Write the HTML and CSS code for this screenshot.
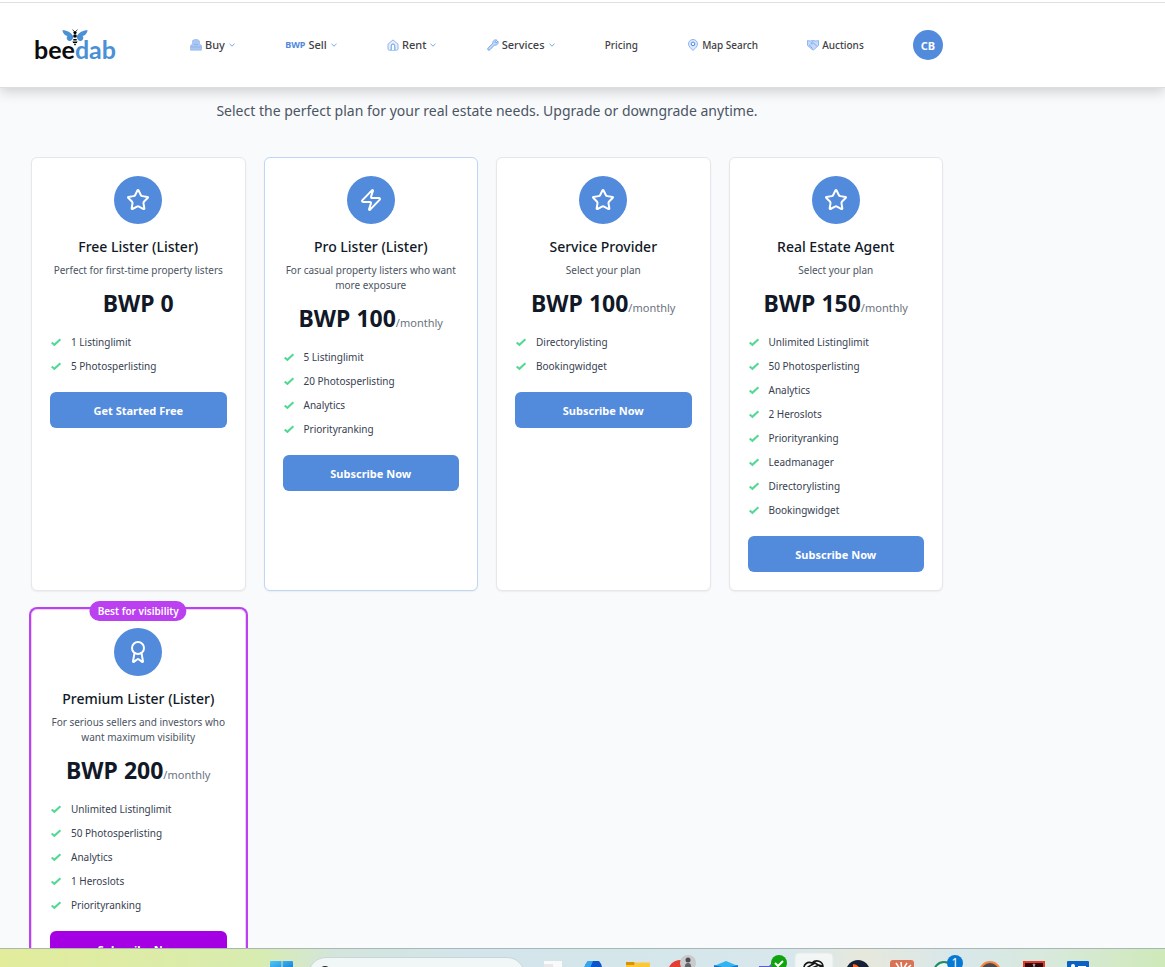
FILE: index.html
```html
<!DOCTYPE html>
<html lang="en">
<head>
<meta charset="utf-8">
<title>beedab – Pricing</title>
<link rel="stylesheet" href="styles.css">
</head>
<body>
<svg class="defs" aria-hidden="true">
  <symbol id="star" viewBox="0 0 24 24"><path d="M11.525 2.295a.53.53 0 0 1 .95 0l2.31 4.679a2.123 2.123 0 0 0 1.595 1.16l5.166.756a.53.53 0 0 1 .294.904l-3.736 3.638a2.123 2.123 0 0 0-.611 1.878l.882 5.14a.53.53 0 0 1-.771.56l-4.618-2.428a2.122 2.122 0 0 0-1.973 0L6.396 21.01a.53.53 0 0 1-.77-.56l.881-5.139a2.122 2.122 0 0 0-.611-1.879L2.16 9.795a.53.53 0 0 1 .294-.906l5.165-.755a2.122 2.122 0 0 0 1.597-1.16z"/></symbol>
  <symbol id="zap" viewBox="0 0 24 24"><path d="M4 14a1 1 0 0 1-.78-1.63l9.9-10.2a.5.5 0 0 1 .86.46l-1.92 6.02A1 1 0 0 0 13 10h7a1 1 0 0 1 .78 1.63l-9.9 10.2a.5.5 0 0 1-.86-.46l1.92-6.02A1 1 0 0 0 11 14z"/></symbol>
  <symbol id="award" viewBox="0 0 24 24"><circle cx="12" cy="8" r="6"/><path d="m15.477 12.89 1.515 8.526a.5.5 0 0 1-.81.47l-3.58-2.687a1 1 0 0 0-1.197 0l-3.586 2.686a.5.5 0 0 1-.81-.469l1.514-8.526"/></symbol>
  <symbol id="check" viewBox="0 0 12 12"><path d="M1.700 6.400 4.400 8.800 10.400 3.200"/></symbol>
  <symbol id="chevron" viewBox="0 0 8 8"><path d="M1.500 2.800 4 5.200 6.500 2.800"/></symbol>
</svg>

<header class="header">
  <div class="container header-row">
    <a class="logo" href="#" aria-label="beedab home">
      <span class="logo-bee">bee</span><span class="logo-dab">dab</span>
      <svg class="logo-icon" viewBox="0 0 26 17">
        <path fill="#4a90d6" d="M11.500 7.500C9 3 4 .8.300 1.200 1 4.500 3 6.500 5.500 7 4 8 4.500 11 7 12c2 .5 4-1.500 4.500-4.500zM14.500 7.500C17 3 22 .8 25.700 1.200 25 4.500 23 6.500 20.500 7c1.500 1 1 4-1.500 5-2 .5-4-1.500-4.500-4.500z"/>
        <circle cx="13" cy="3.600" r="1.600"/><ellipse cx="13" cy="7" rx="1.800" ry="1.700"/>
        <path d="M11.300 10h3.400v1.400h-3.400zM10.400 12.400h5.200l-.8 1.600h-3.600zM11.700 14.800h2.600L13 16.800z"/>
        <path fill="none" stroke="#111" stroke-width=".8" d="M12.300 2.400 10.500.7M13.700 2.400 15.500.7"/>
      </svg>
    </a>
    <nav class="nav" aria-label="Main">
      <button class="nav-item" type="button">
        <svg class="nav-icon" viewBox="0 0 12 12"><path fill="#a9c5f1" stroke="#8fb3ec" stroke-width=".6" d="M2.500 5V1.600L4.500.5h3l2 1.500V5l2 1.500v4.700H.5V6.500z"/><path stroke="#7ea7e8" stroke-width=".6" d="M.6 8h11M4 5.500h4"/></svg>
        <span>Buy</span><svg class="chevron"><use href="#chevron"/></svg>
      </button>
      <button class="nav-item" type="button"><span class="currency">BWP</span><span>Sell</span><svg class="chevron"><use href="#chevron"/></svg></button>
      <button class="nav-item" type="button">
        <svg class="nav-icon" viewBox="0 0 12 12"><path fill="#e8f0fc" stroke="#8ab4f3" stroke-width="1" d="M1 5.200 6 .9l5 4.300v4.600q0 1.400-1.400 1.400H2.400Q1 11.200 1 9.800z"/><path fill="#fff" stroke="#5f97e8" stroke-width="1" d="M4.200 11V6.800Q4.200 5 6 5t1.800 1.800V11"/></svg>
        <span>Rent</span><svg class="chevron"><use href="#chevron"/></svg>
      </button>
      <button class="nav-item" type="button">
        <svg class="nav-icon" viewBox="0 0 12 12"><path fill="#c5dafa" stroke="#6b9fea" stroke-width=".9" stroke-linejoin="round" d="M10 1.200 8 3.200l.9.900 2-2c1 2.300-1 4.600-3.400 3.900L3 10.700Q2 11.600 1 10.900q-.8-1 .2-2L5.900 4.300C5.300 2 7.700.1 10 1.200z"/></svg>
        <span>Services</span><svg class="chevron"><use href="#chevron"/></svg>
      </button>
      <a class="nav-item nav-link" href="#">Pricing</a>
      <a class="nav-item nav-link" href="#">
        <svg class="nav-icon" viewBox="0 0 12 12"><path fill="#dce9fc" stroke="#8ab4f3" stroke-width="1" d="M6 11.400C3.300 9 1.500 7.300 1.500 4.900a4.500 4.400 0 0 1 9 0C10.500 7.300 8.700 9 6 11.400z"/><circle cx="6" cy="4.900" r="1.800" fill="#fff" stroke="#4b88e0"/></svg>
        <span>Map Search</span>
      </a>
      <a class="nav-item nav-link" href="#">
        <svg class="nav-icon" viewBox="0 0 12 12"><path fill="#c5dafa" stroke="#7eabef" stroke-width=".8" stroke-linejoin="round" d="M.5 1.500 3 2l3-.5L9 2l2.500-.5v5L6.500 11 5 10.500.5 6.500z"/><path fill="none" stroke="#6b9fea" stroke-width=".8" d="M6 2.300 4 4.600q1.200 1 2.500-.5L9.800 7M4 8l1.500 1.500M2 5.800 4.500 8"/></svg>
        <span>Auctions</span>
      </a>
      <button class="avatar" type="button" aria-label="Account">CB</button>
    </nav>
  </div>
</header>

<main class="main">
  <div class="container">
    <p class="lead">Select the perfect plan for your real estate needs. Upgrade or downgrade anytime.</p>
    <div class="plans">
      <article class="card">
        <div class="card-icon"><svg><use href="#star"/></svg></div>
        <h2 class="card-title">Free Lister (Lister)</h2>
        <p class="card-text">Perfect for first-time property listers</p>
        <p class="price">BWP 0</p>
        <ul class="features">
          <li><svg><use href="#check"/></svg>1 Listinglimit</li>
          <li><svg><use href="#check"/></svg>5 Photosperlisting</li>
        </ul>
        <button class="cta" type="button">Get Started Free</button>
      </article>
      <article class="card card-popular">
        <div class="card-icon"><svg><use href="#zap"/></svg></div>
        <h2 class="card-title">Pro Lister (Lister)</h2>
        <p class="card-text">For casual property listers who want more exposure</p>
        <p class="price">BWP 100<span class="period">/monthly</span></p>
        <ul class="features">
          <li><svg><use href="#check"/></svg>5 Listinglimit</li>
          <li><svg><use href="#check"/></svg>20 Photosperlisting</li>
          <li><svg><use href="#check"/></svg>Analytics</li>
          <li><svg><use href="#check"/></svg>Priorityranking</li>
        </ul>
        <button class="cta" type="button">Subscribe Now</button>
      </article>
      <article class="card">
        <div class="card-icon"><svg><use href="#star"/></svg></div>
        <h2 class="card-title">Service Provider</h2>
        <p class="card-text">Select your plan</p>
        <p class="price">BWP 100<span class="period">/monthly</span></p>
        <ul class="features">
          <li><svg><use href="#check"/></svg>Directorylisting</li>
          <li><svg><use href="#check"/></svg>Bookingwidget</li>
        </ul>
        <button class="cta" type="button">Subscribe Now</button>
      </article>
      <article class="card">
        <div class="card-icon"><svg><use href="#star"/></svg></div>
        <h2 class="card-title">Real Estate Agent</h2>
        <p class="card-text">Select your plan</p>
        <p class="price">BWP 150<span class="period">/monthly</span></p>
        <ul class="features">
          <li><svg><use href="#check"/></svg>Unlimited Listinglimit</li>
          <li><svg><use href="#check"/></svg>50 Photosperlisting</li>
          <li><svg><use href="#check"/></svg>Analytics</li>
          <li><svg><use href="#check"/></svg>2 Heroslots</li>
          <li><svg><use href="#check"/></svg>Priorityranking</li>
          <li><svg><use href="#check"/></svg>Leadmanager</li>
          <li><svg><use href="#check"/></svg>Directorylisting</li>
          <li><svg><use href="#check"/></svg>Bookingwidget</li>
        </ul>
        <button class="cta" type="button">Subscribe Now</button>
      </article>
      <article class="card card-featured">
        <span class="badge">Best for visibility</span>
        <div class="card-icon"><svg><use href="#award"/></svg></div>
        <h2 class="card-title">Premium Lister (Lister)</h2>
        <p class="card-text">For serious sellers and investors who want maximum visibility</p>
        <p class="price">BWP 200<span class="period">/monthly</span></p>
        <ul class="features">
          <li><svg><use href="#check"/></svg>Unlimited Listinglimit</li>
          <li><svg><use href="#check"/></svg>50 Photosperlisting</li>
          <li><svg><use href="#check"/></svg>Analytics</li>
          <li><svg><use href="#check"/></svg>1 Heroslots</li>
          <li><svg><use href="#check"/></svg>Priorityranking</li>
        </ul>
        <button class="cta cta-featured" type="button">Subscribe Now</button>
      </article>
    </div>
  </div>
</main>

<footer class="taskbar">
  <svg class="task" viewBox="0 0 44 44"><defs><linearGradient id="win" x2="1" y2="1"><stop stop-color="#4cc8fb"/><stop offset="1" stop-color="#0b74d1"/></linearGradient></defs><path fill="url(#win)" d="M11 12h10.500v11H10V13q0-1 1-1zM22.500 12H32q1 0 1 1v10H22.500z"/></svg>
  <div class="task-search"><svg viewBox="0 0 20 20"><circle cx="8" cy="8" r="5" fill="none" stroke="#222" stroke-width="2"/></svg></div>
  <svg class="task" viewBox="0 0 44 44"><path fill="#fafafa" d="M16 12h18v20H16z"/><path fill="#e8e8e8" d="M16 15h9v12h-9z"/></svg>
  <svg class="task" viewBox="0 0 44 44"><path fill="#0a56c9" d="M16 12h11q4 4 4 16H11q1-12 5-16z"/><path fill="#35a5f0" d="M16 12h5l-5 12h-5q1-9 5-12z"/></svg>
  <svg class="task" viewBox="0 0 44 44"><path fill="#d99200" d="M10 13h8l2 3h-10z"/><path fill="#fcc838" d="M19 13.500h15V30H10V16h8z"/></svg>
  <svg class="task" viewBox="0 0 44 44"><circle cx="20" cy="23" r="12" fill="#e43e33"/><circle cx="28" cy="14" r="8" fill="#c9cacc"/><circle cx="28" cy="11" r="2.500" fill="#4b4d50"/><path fill="#606266" d="m24 21 1.500-6q2.500-2 5 0l1.500 6z"/></svg>
  <svg class="task" viewBox="0 0 44 44"><path fill="#31b4f1" d="m22 12 12 5v13H10V17z"/><path fill="#1275c8" d="m10 16 12 3 12-3v14H10z"/></svg>
  <svg class="task" viewBox="0 0 44 44"><path fill="#5b5fc7" d="M11 17h10l4-4h8v18H11z"/><circle cx="31" cy="14" r="8" fill="#11a30f"/><path fill="none" stroke="#fff" stroke-width="2" d="m27 14 3 3 5-5"/></svg>
  <svg class="task" viewBox="0 0 44 44"><rect x="3" y="4" width="38" height="44" rx="4" fill="#f2f6f5" stroke="#e2ebe9"/><path fill="none" stroke="#151515" stroke-width="1.600" d="M12 21c-1-6 4-9 8-7 4-4 11-2 11 4M16 24v-6l7-4 8 5M20 22v-3l7-3q5 1 5 5"/></svg>
  <svg class="task" viewBox="0 0 44 44"><circle cx="22" cy="23" r="12" fill="#172136"/><path fill="#ff641f" d="M17 15q6 0 8 8h-8z"/></svg>
  <svg class="task" viewBox="0 0 44 44"><rect x="10" y="11" width="24" height="24" rx="3" fill="#d87355"/><path stroke="#fff" stroke-width="1.500" d="m16 14 6 9M21 13l1 9M27 14l-5 8M31 16l-8 7"/></svg>
  <svg class="task" viewBox="0 0 44 44"><circle cx="20" cy="23" r="10" fill="#eaf5ef" stroke="#208a62" stroke-width="2"/><circle cx="31" cy="14" r="8" fill="#0879d3"/><text class="task-count" x="31" y="18">1</text></svg>
  <svg class="task" viewBox="0 0 44 44"><circle cx="22" cy="23" r="10" fill="#4c4a4e" stroke="#f48748" stroke-width="2"/></svg>
  <svg class="task" viewBox="0 0 44 44"><path fill="#2b0b0c" stroke="#e83728" stroke-width="2" d="M12 13h20v22H12z"/><path fill="none" stroke="#bbb" d="M22 21v-4q-2-2 0-2t0 2"/></svg>
  <svg class="task" viewBox="0 0 44 44"><rect x="11" y="12" width="22" height="22" rx="1" fill="#0b62c4"/><circle cx="17" cy="17" r="2" fill="#fff"/><path fill="#fff" d="M22 17h8v3h-8z"/></svg>
</footer>
</body>
</html>
```

FILE: styles.css
```css
* { box-sizing: border-box; }

body {
  margin: 0;
  height: 100vh;
  display: flex;
  flex-direction: column;
  overflow: hidden;
  background: #f9fafc;
  color: #111827;
  font-family: "Noto Sans", "Open Sans", sans-serif;
}

h2, p, ul { margin: 0; padding: 0; }
button { font: inherit; border: 0; padding: 0; background: none; cursor: pointer; }
a { color: inherit; text-decoration: none; }
.defs { display: none; }

.container { max-width: 974px; padding: 0 31px; }

/* Header */
.header {
  flex: none;
  margin-top: 2px;
  position: relative;
  background: #fff;
  border-top: 1px solid #dfe0e1;
  border-bottom: 1px solid #dcdddf;
  box-shadow: 0 -2px 0 #fff, 0 4px 12px rgba(0, 0, 0, .17);
}
.header-row { display: flex; align-items: center; height: 84px; }
.logo {
  position: relative;
  width: 86px;
  padding: 8px 0 0 3px;
  font: 700 25px/28px Lato, sans-serif;
  white-space: nowrap;
}
.logo-bee { color: #0c0c0c; }
.logo-dab { color: #4a90d6; }
.logo-icon { position: absolute; left: 31px; top: 2px; width: 26px; height: 17px; }
.nav {
  flex: 1;
  display: flex;
  align-items: center;
  justify-content: space-between;
  margin-left: 73px;
}
.nav-item {
  display: flex;
  align-items: center;
  gap: 3px;
  color: #3f4146;
  font-size: 11px;
  font-weight: 500;
  line-height: 16px;
  white-space: nowrap;
}
.nav-link { font-size: 10px; }
.nav-icon { width: 12px; height: 12px; }
.currency { color: #5189de; font-size: 9px; font-weight: 700; }
.chevron { width: 8px; height: 8px; fill: none; stroke: #75a8ee; }
.avatar {
  width: 30px;
  height: 30px;
  border-radius: 50%;
  background: #528adc;
  color: #fff;
  font-size: 11px;
  font-weight: 700;
}

/* Plans */
.main { flex: 1; min-height: 0; overflow: hidden; padding-top: 11px; }
.lead { margin-bottom: 34px; color: #4b5563; font-size: 14px; line-height: 24px; text-align: center; }
.plans { display: grid; grid-template-columns: repeat(4, 1fr); gap: 18px; }
.card {
  position: relative;
  padding: 18px;
  background: #fff;
  border: 1px solid #e5e7eb;
  border-radius: 6px;
  box-shadow: 0 1px 2px rgba(0, 0, 0, .06);
  text-align: center;
}
.card-popular { border-color: #bdd7f5; }
.card-featured { border-color: #ead0fa; box-shadow: 0 0 0 2px #bb43ef; }
.badge {
  position: absolute;
  top: -9px;
  left: 50%;
  transform: translateX(-50%);
  padding: 0 8px;
  border-radius: 10px;
  background: #bb40f0;
  color: #fff;
  font-size: 10px;
  font-weight: 600;
  line-height: 20px;
  white-space: nowrap;
}
.card-icon {
  display: flex;
  align-items: center;
  justify-content: center;
  width: 48px;
  height: 48px;
  margin: 0 auto 11px;
  border-radius: 50%;
  background: #528adc;
}
.card-icon svg {
  width: 24px;
  height: 24px;
  fill: none;
  stroke: #fff;
  stroke-width: 2;
  stroke-linecap: round;
  stroke-linejoin: round;
}
.card-title { margin-bottom: 4px; font-size: 14px; font-weight: 500; line-height: 24px; }
.card-text { margin-bottom: 11px; color: #4b5563; font-size: 10px; line-height: 15px; }
.price { margin-bottom: 17px; font-size: 23px; font-weight: 700; line-height: 28px; white-space: nowrap; }
.period { color: #6b7280; font-size: 11px; font-weight: 400; line-height: 1; }
.features {
  display: grid;
  gap: 8px;
  margin-bottom: 18px;
  color: #374151;
  font-size: 10px;
  line-height: 16px;
  list-style: none;
}
.features li { display: flex; align-items: center; gap: 9px; }
.features svg { width: 12px; height: 12px; fill: none; stroke: #50d993; stroke-width: 2; }
.cta {
  display: block;
  width: 100%;
  height: 36px;
  border-radius: 6px;
  background: #528adc;
  color: #fff;
  font-size: 11px;
  font-weight: 700;
}
.cta-featured { background: #a500e3; }

/* Taskbar */
.taskbar {
  flex: none;
  display: flex;
  height: 19px;
  padding-left: 260px;
  overflow: hidden;
  border-top: 1px solid #a9b6b5;
  background: linear-gradient(90deg, #e2ec9b 0, #d8ecb0 22%, #d3e5dc 29%, #d3e5ea 40%, #d7e7ec 68%, #e7e8dc 74%, #d8e7ea 82%, #d8e9dc 90%, #cfe9b9 100%);
}
.task { flex: none; width: 44px; height: 44px; }
.task-search {
  flex: none;
  width: 217px;
  height: 36px;
  margin: 8px 3px 0 4px;
  padding: 6px 8px;
  border: 1px solid #c7d6d9;
  border-radius: 18px;
  background: #f1f6f6;
}
.task-search svg { display: block; width: 20px; height: 20px; }
.task-count { fill: #fff; font-size: 12px; text-anchor: middle; }
```
